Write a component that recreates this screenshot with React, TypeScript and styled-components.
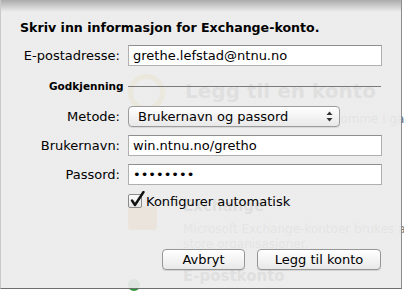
import React from "react";
import styled, { createGlobalStyle } from "styled-components";

const GlobalStyle = createGlobalStyle`
  html, body {
    margin: 0;
    padding: 0;
    background: #ffffff;
  }
  body {
    font-family: "DejaVu Sans", "Noto Sans", sans-serif;
    -webkit-font-smoothing: antialiased;
  }
`;

const Stage = styled.div`
  position: relative;
  width: 404px;
  height: 292px;
  overflow: hidden;
  background: #ffffff;
`;

/* the mail window behind the sheet */
const BackWindow = styled.div`
  display: flex;
  flex-direction: column;
  padding: 74px 0 0 128px;
  height: 292px;
  box-sizing: border-box;
  color: #444;
`;

const BackRow = styled.div<{ $top: number }>`
  display: flex;
  align-items: flex-start;
  margin-top: ${(p) => p.$top}px;
  white-space: nowrap;
`;

const IconSlot = styled.div<{ $w: number }>`
  width: ${(p) => p.$w}px;
  flex: none;
  display: flex;
`;

const RingIcon = styled.div`
  width: 37px;
  height: 37px;
  border-radius: 50%;
  border: 5px solid #e8b820;
  box-sizing: border-box;
`;

const CaseIcon = styled.div`
  width: 29px;
  height: 24px;
  margin-top: 10px;
  border-radius: 3px;
  background: #e08a28;
`;

const DotIcon = styled.div`
  width: 12px;
  height: 12px;
  margin-top: 13px;
  border-radius: 50%;
  background: #2f9a3a;
`;

const BackTitle = styled.div`
  font-size: 20px;
  font-weight: bold;
  margin: 5px 0 0 20px;
  color: #444;
`;

const BackLine = styled.div`
  font-size: 12px;
  margin-left: 62px;
  color: #6a7480;
`;

const BackText = styled.div`
  display: flex;
  flex-direction: column;
  margin-left: 26px;
  font-size: 12px;
  line-height: 15px;
  color: #808080;
`;

const BackHeading = styled.div`
  font-size: 15px;
  font-weight: bold;
  line-height: 20px;
  color: #444;
  margin-bottom: 6px;
`;

/* the sheet, slightly see-through */
const Sheet = styled.div`
  position: absolute;
  left: 0;
  top: 0;
  width: 402px;
  height: 289px;
  box-sizing: border-box;
  border-left: 1px solid #c9c9c9;
  border-right: 1px solid #8d8d8d;
  border-bottom: 1px solid #6f6f6f;
  background: linear-gradient(
    to bottom,
    rgba(165, 165, 165, 0.93) 0px,
    rgba(235, 235, 235, 0.93) 12px,
    rgba(235, 235, 235, 0.93) 100%
  );
  padding: 20px 0 0 19px;
  display: flex;
  flex-direction: column;
  color: #000;
  font-size: 13px;
`;

const Title = styled.div`
  font-weight: bold;
  font-size: 12.6px;
  line-height: 16px;
`;

const Form = styled.div`
  display: flex;
  flex-direction: column;
  margin-top: 9px;
`;

const Row = styled.div<{ $top?: number }>`
  display: grid;
  grid-template-columns: 100px 254px;
  column-gap: 8px;
  align-items: center;
  margin-top: ${(p) => p.$top ?? 0}px;
`;

const Label = styled.label`
  text-align: right;
  white-space: nowrap;
  font-size: 13px;
`;

const Field = styled.input`
  height: 21px;
  box-sizing: border-box;
  border: 1px solid #b0b0b0;
  border-top-color: #8e8e8e;
  background: #fff;
  padding: 0 4px;
  font-family: inherit;
  font-size: 13px;
  color: #000;
  outline: none;
  margin: 0;
`;

const Section = styled.div`
  display: flex;
  align-items: center;
  height: 16px;
  margin-top: 12px;
  padding: 0 20px 0 29px;
`;

const SectionLabel = styled.span`
  font-size: 10.5px;
  font-weight: bold;
`;

const Rule = styled.div`
  flex: 1;
  height: 1px;
  margin-left: 4px;
  background: #7a7a7a;
`;

const Popup = styled.div`
  width: 212px;
  height: 21px;
  box-sizing: border-box;
  border: 1px solid #9c9c9c;
  border-radius: 4px;
  background: linear-gradient(to bottom, #ffffff, #f1f1f1 60%, #e9e9e9);
  display: flex;
  align-items: center;
  justify-content: space-between;
  padding: 0 6px 0 9px;
  font-size: 13px;
  box-shadow: 0 1px 0 rgba(0, 0, 0, 0.08);
`;

const CheckRow = styled.div`
  display: flex;
  align-items: center;
  margin: 8px 0 0 108px;
  height: 16px;
  gap: 4px;
`;

const Box = styled.div`
  position: relative;
  width: 14px;
  height: 14px;
  box-sizing: border-box;
  border: 1px solid #8a8a8a;
  border-radius: 2px;
  background: linear-gradient(to bottom, #fdfdfd, #e6e6e6);
  svg {
    position: absolute;
    left: 1px;
    top: -4px;
  }
`;

const Buttons = styled.div`
  display: flex;
  gap: 12px;
  margin: 40px 0 0 142px;
`;

const Button = styled.button<{ $w: number }>`
  width: ${(p) => p.$w}px;
  height: 21px;
  box-sizing: border-box;
  border: 1px solid #969696;
  border-radius: 4px;
  background: linear-gradient(to bottom, #ffffff, #f3f3f3 55%, #e8e8e8);
  font-family: inherit;
  font-size: 13px;
  color: #000;
  padding: 0;
  box-shadow: 0 1px 0 rgba(0, 0, 0, 0.1);
`;

const Arrows = () => (
  <svg width="7" height="11" viewBox="0 0 7 11">
    <path d="M3.5 0.5 L6.5 4 L0.5 4 Z" fill="#333" />
    <path d="M3.5 10.5 L6.5 7 L0.5 7 Z" fill="#333" />
  </svg>
);

const Check = () => (
  <svg width="15" height="16" viewBox="0 0 15 16">
    <path d="M2 9.5 L5 14 L13.5 1" fill="none" stroke="#111" strokeWidth="2.4" strokeLinecap="round" strokeLinejoin="round" />
  </svg>
);

export default function App() {
  return (
    <Stage>
      <GlobalStyle />
      <BackWindow>
        <BackRow $top={0}>
          <IconSlot $w={37}>
            <RingIcon />
          </IconSlot>
          <BackTitle>Legg til en konto</BackTitle>
        </BackRow>
        <BackRow $top={1}>
          <BackLine>Velg en kontotype for å komme i gang.</BackLine>
        </BackRow>
        <BackRow $top={70}>
          <IconSlot $w={29}>
            <CaseIcon />
          </IconSlot>
          <BackText>
            <BackHeading>Exchange</BackHeading>
            <span>Microsoft Exchange-kontoer brukes av skoler og</span>
            <span>store organisasjoner.</span>
          </BackText>
        </BackRow>
        <BackRow $top={14}>
          <IconSlot $w={29}>
            <DotIcon />
          </IconSlot>
          <BackText>
            <BackHeading>E-postkonto</BackHeading>
          </BackText>
        </BackRow>
      </BackWindow>

      <Sheet>
        <Title>Skriv inn informasjon for Exchange-konto.</Title>
        <Form>
          <Row>
            <Label>E-postadresse:</Label>
            <Field readOnly defaultValue="grethe.lefstad@ntnu.no" />
          </Row>
          <Section>
            <SectionLabel>Godkjenning</SectionLabel>
            <Rule />
          </Section>
          <Row $top={12}>
            <Label>Metode:</Label>
            <Popup>
              <span>Brukernavn og passord</span>
              <Arrows />
            </Popup>
          </Row>
          <Row $top={8}>
            <Label>Brukernavn:</Label>
            <Field readOnly defaultValue="win.ntnu.no/gretho" />
          </Row>
          <Row $top={8}>
            <Label>Passord:</Label>
            <Field type="password" readOnly defaultValue="passord1" />
          </Row>
          <CheckRow>
            <Box>
              <Check />
            </Box>
            <span>Konfigurer automatisk</span>
          </CheckRow>
          <Buttons>
            <Button $w={83}>Avbryt</Button>
            <Button $w={124}>Legg til konto</Button>
          </Buttons>
        </Form>
      </Sheet>
    </Stage>
  );
}
